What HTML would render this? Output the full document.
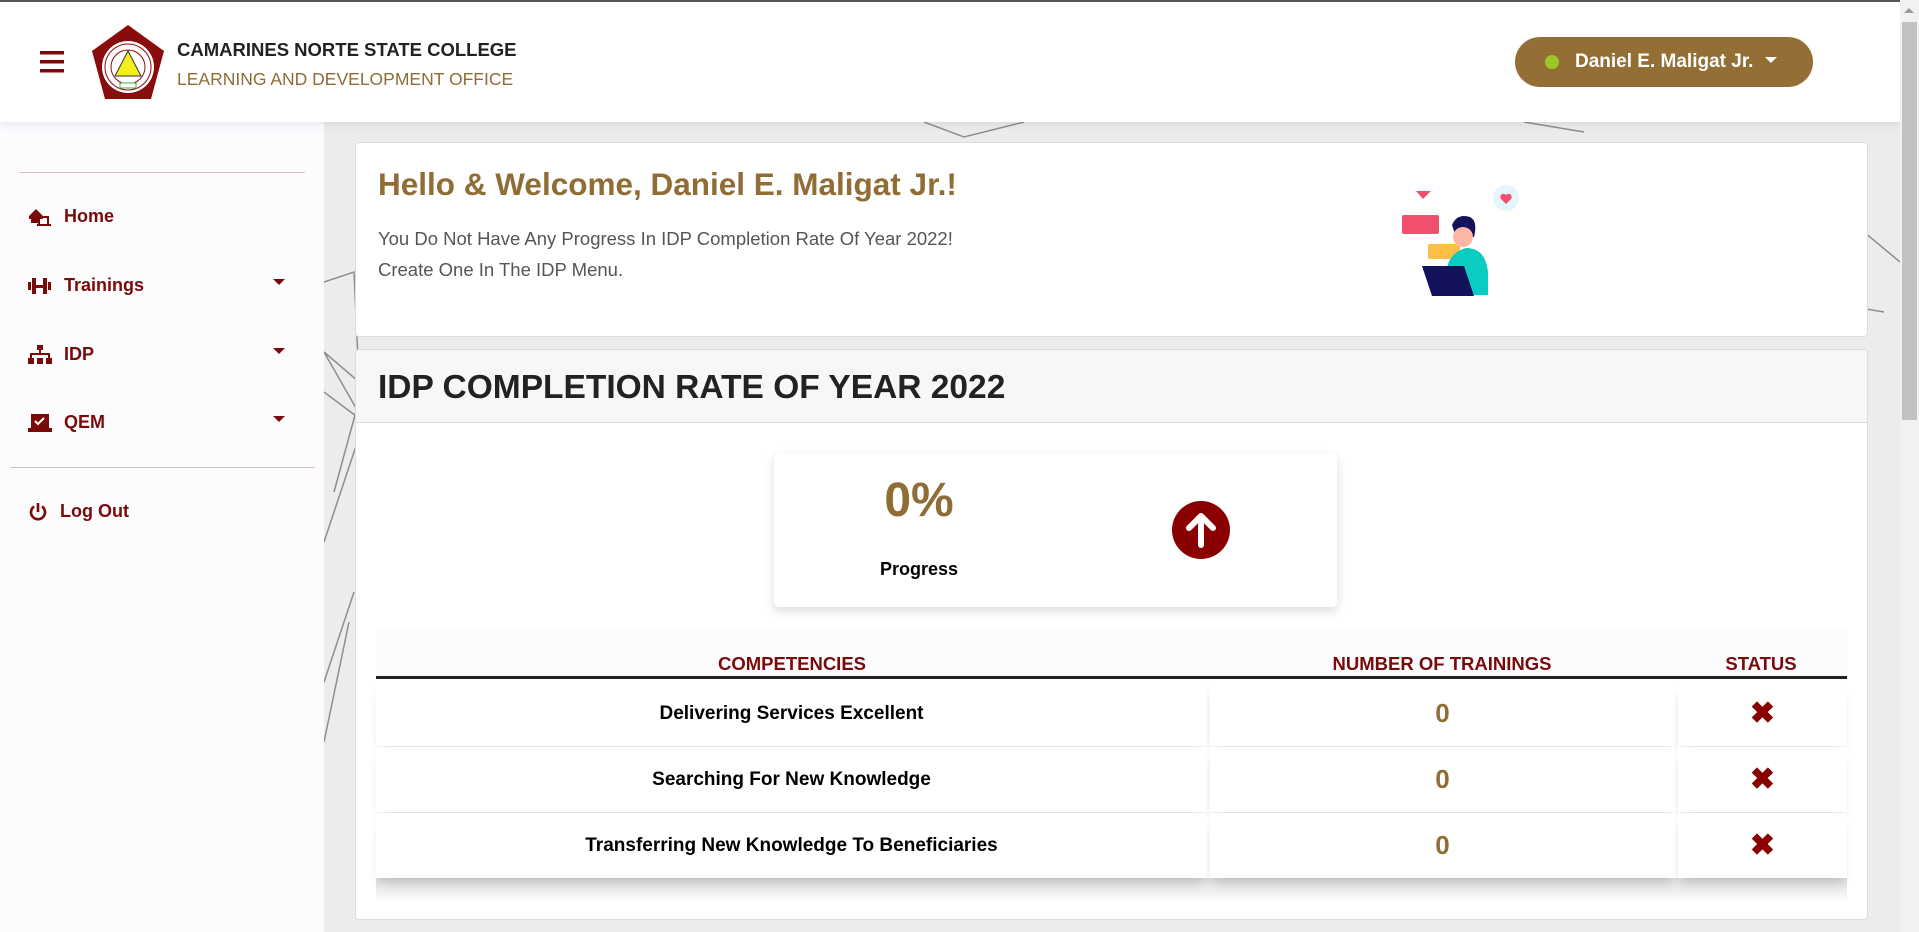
<!DOCTYPE html>
<html><head><meta charset="utf-8"><style>
*{box-sizing:border-box;margin:0;padding:0}
body{width:1919px;height:932px;overflow:hidden;font-family:"Liberation Sans",sans-serif;background:#ececec;position:relative}
.top{position:absolute;left:0;top:0;width:1900px;height:122px;background:#fff;box-shadow:0 3px 8px rgba(0,0,0,.08);z-index:3;border-top:2px solid #555}
.sb{position:absolute;left:0;top:122px;width:324px;height:810px;background:#fcfbfe;z-index:2}
.sb .hr{position:absolute;height:1px;background:#e2b9bd}
.nav{position:absolute;left:28px;color:#7a0a0a;font-weight:bold;font-size:18px;display:flex;align-items:center}
.nav svg{margin-right:12px}
.car{position:absolute;left:273px;width:0;height:0;border-left:6px solid transparent;border-right:6px solid transparent;border-top:6px solid #7a0a0a}
.card{position:absolute;background:#fff;border:1px solid #dcdcdc;border-radius:4px;z-index:1}
.scroll{position:absolute;left:1900px;top:0;width:19px;height:932px;background:#f1f1f1;z-index:4}
.th{position:absolute;top:653px;color:#7a0a0a;font-weight:bold;font-size:18.5px;transform:translateX(-50%);white-space:nowrap}
.cell{position:absolute;background:#fff;box-shadow:0 8px 10px -4px rgba(0,0,0,.15);display:flex;align-items:center;justify-content:center;font-weight:bold}
</style></head><body>
<svg style="position:absolute;left:324px;top:122px;z-index:0" width="1576" height="810">
<g stroke="#777" stroke-width="1.5" fill="none" opacity=".8">
<path d="M0 160 L30 150 L35 260 L0 230"/><path d="M0 230 L40 300 L0 420 M40 300 L0 270 M40 260 L10 370"/>
<path d="M30 470 L0 560 M0 620 L25 500"/>
<path d="M600 0 L640 15 L700 0 M1200 0 L1260 10"/>
<path d="M1540 110 L1576 140 M1500 180 L1560 190"/>
<path d="M1100 160 L1200 200 L1300 170 M900 170 L1000 200"/>
</g></svg>
<div class="top">
<svg style="position:absolute;left:40px;top:49px" width="24" height="22"><rect y="0" width="24" height="3.5" fill="#7a0a0a"/><rect y="9" width="24" height="3.5" fill="#7a0a0a"/><rect y="18" width="24" height="3.5" fill="#7a0a0a"/></svg>
<svg style="position:absolute;left:90px;top:21px" width="76" height="78" viewBox="0 0 76 78">
<polygon points="38,2 74,28 61,76 15,76 2,28" fill="#8a0b0b"/>
<circle cx="38" cy="44" r="26" fill="#fff"/><circle cx="38" cy="44" r="23" fill="none" stroke="#8a0b0b" stroke-width="1"/><circle cx="38" cy="44" r="17" fill="none" stroke="#8a0b0b" stroke-width="1"/>
<polygon points="38,28 51,53 25,53" fill="#f5ef1c" stroke="#333" stroke-width="1"/><rect x="30" y="60" width="16" height="5" fill="#fff" stroke="#4a4" stroke-width="1"/></svg>
<div style="position:absolute;left:177px;top:37px;font-weight:bold;font-size:18.5px;color:#222">CAMARINES NORTE STATE COLLEGE</div>
<div style="position:absolute;left:177px;top:67px;font-size:17.5px;color:#8f6d35">LEARNING AND DEVELOPMENT OFFICE</div>
<div style="position:absolute;left:1515px;top:35px;width:298px;height:50px;border-radius:25px;background:#936f35;color:#fff;font-weight:bold;font-size:19px;display:flex;align-items:center">
<span style="width:14px;height:14px;border-radius:50%;background:#9bc72a;margin-left:30px;margin-right:16px"></span>Daniel E. Maligat Jr.<span style="margin-left:12px;border-left:6px solid transparent;border-right:6px solid transparent;border-top:6px solid #fff;margin-top:-4px"></span></div>
</div>
<div class="sb">
<div class="hr" style="left:20px;top:50px;width:285px"></div>
<div class="nav" style="top:84px"><svg width="24" height="20" viewBox="0 0 24 20"><path d="M1 9 L8 2 L15 9 L15 12 L1 12Z" fill="#7a0a0a"/><rect x="3" y="8" width="8" height="8" fill="#7a0a0a"/><rect x="11" y="10" width="9" height="8" fill="none" stroke="#7a0a0a" stroke-width="2"/><rect x="9" y="17" width="14" height="2" fill="#7a0a0a"/></svg>Home</div>
<div class="nav" style="top:153px"><svg width="24" height="18" viewBox="0 0 24 18"><rect x="0" y="5" width="3" height="8" fill="#7a0a0a"/><rect x="4" y="1" width="4" height="16" fill="#7a0a0a"/><rect x="8" y="8" width="8" height="3" fill="#7a0a0a"/><rect x="15" y="1" width="4" height="16" fill="#7a0a0a"/><rect x="20" y="5" width="3" height="8" fill="#7a0a0a"/></svg>Trainings</div>
<div class="car" style="top:157px"></div>
<div class="nav" style="top:222px"><svg width="24" height="20" viewBox="0 0 24 20"><rect x="9" y="0" width="6" height="5" fill="#7a0a0a"/><path d="M12 5v4M3 13V9h18v4" stroke="#7a0a0a" stroke-width="2" fill="none"/><rect x="0" y="13" width="6" height="6" fill="#7a0a0a"/><rect x="9" y="13" width="6" height="6" fill="#7a0a0a"/><rect x="18" y="13" width="6" height="6" fill="#7a0a0a"/></svg>IDP</div>
<div class="car" style="top:226px"></div>
<div class="nav" style="top:290px"><svg width="24" height="20" viewBox="0 0 24 20"><rect x="3" y="1" width="18" height="14" fill="#7a0a0a"/><path d="M7 8l3 3 6-6" stroke="#fff" stroke-width="2" fill="none"/><rect x="0" y="15" width="24" height="4" fill="#7a0a0a"/></svg>QEM</div>
<div class="car" style="top:294px"></div>
<div class="hr" style="left:10px;top:345px;width:305px"></div>
<div class="nav" style="top:379px"><svg width="20" height="20" viewBox="0 0 20 20"><path d="M6 4.5A7 7 0 1 0 14 4.5" stroke="#7a0a0a" stroke-width="2.6" fill="none"/><path d="M10 1v9" stroke="#7a0a0a" stroke-width="2.6"/></svg>Log Out</div>
</div>
<div class="card" style="left:355px;top:142px;width:1513px;height:195px">
<div style="position:absolute;left:22px;top:23px;font-size:31.5px;font-weight:bold;color:#8f6d35">Hello &amp; Welcome, Daniel E. Maligat Jr.!</div>
<div style="position:absolute;left:22px;top:80px;font-size:18.5px;color:#555;line-height:31px">You Do Not Have Any Progress In IDP Completion Rate Of Year 2022!<br>Create One In The IDP Menu.</div>
<svg style="position:absolute;left:1035px;top:40px" width="140" height="115" viewBox="0 0 140 115">
<circle cx="115" cy="15" r="13" fill="#e6f4fb"/><path d="M115 21l-5-5a3 3 0 0 1 5-4 3 3 0 0 1 5 4z" fill="#f0506e"/>
<path d="M25 8l15 0-8 8z" fill="#f0506e"/>
<rect x="11" y="32" width="37" height="19" rx="2" fill="#f0506e"/><rect x="37" y="61" width="32" height="15" rx="2" fill="#fbbf45"/>
<path d="M61 42q5-12 18-8q8 4 4 20l-18 0z" fill="#15125c"/><circle cx="72" cy="54" r="10" fill="#fcb7a5"/>
<path d="M55 95q0-25 20-30q20 0 22 25l0 22l-35 0z" fill="#0ccbc0"/>
<path d="M31 83l42 0 10 30-42 0z" fill="#15125c"/></svg>
</div>
<div class="card" style="left:355px;top:349px;width:1513px;height:571px;overflow:hidden">
<div style="position:absolute;left:0;top:0;width:100%;height:73px;background:#f7f7f7;border-bottom:1px solid #ddd"></div>
<div style="position:absolute;left:22px;top:19px;font-size:33.5px;font-weight:bold;color:#222">IDP COMPLETION RATE OF YEAR 2022</div>
</div>
<div style="position:absolute;left:774px;top:453px;width:563px;height:154px;background:#fff;border-radius:5px;box-shadow:0 4px 10px rgba(0,0,0,.15);z-index:1">
<div style="position:absolute;left:145px;top:20px;width:0;display:flex;justify-content:center"><span style="font-size:48px;font-weight:bold;color:#8f6d35;white-space:nowrap">0%</span></div>
<div style="position:absolute;left:145px;top:106px;width:0;display:flex;justify-content:center"><span style="font-size:18px;font-weight:bold;white-space:nowrap">Progress</span></div>
<svg style="position:absolute;left:398px;top:48px" width="58" height="58" viewBox="0 0 58 58"><circle cx="29" cy="29" r="29" fill="#8a0000"/><path d="M29 44V16M17 27l12-12 12 12" stroke="#fff" stroke-width="6" fill="none" stroke-linecap="round" stroke-linejoin="round"/></svg>
</div>
<div style="position:absolute;left:376px;top:628px;width:1471px;height:51px;background:#fcfbfe;border-bottom:3px solid #222;z-index:1"></div>
<div style="position:absolute;left:376px;top:878px;width:1471px;height:22px;background:linear-gradient(#ddd,#fafafa);z-index:1"></div>
<div class="th" style="left:792px;z-index:2">COMPETENCIES</div>
<div class="th" style="left:1442px;z-index:2">NUMBER OF TRAININGS</div>
<div class="th" style="left:1761px;z-index:2">STATUS</div>
<div style="z-index:1;position:absolute;left:0;top:0">
<div class="cell" style="left:376px;top:681px;width:831px;height:65px;font-size:19px">Delivering Services Excellent</div>
<div class="cell" style="left:1210px;top:681px;width:465px;height:65px;font-size:26px;color:#8f6d35">0</div>
<div class="cell" style="left:1678px;top:681px;width:169px;height:65px;font-size:30px;color:#8a0000">✖</div>
<div class="cell" style="left:376px;top:747px;width:831px;height:65px;font-size:19px">Searching For New Knowledge</div>
<div class="cell" style="left:1210px;top:747px;width:465px;height:65px;font-size:26px;color:#8f6d35">0</div>
<div class="cell" style="left:1678px;top:747px;width:169px;height:65px;font-size:30px;color:#8a0000">✖</div>
<div class="cell" style="left:376px;top:813px;width:831px;height:65px;font-size:19px">Transferring New Knowledge To Beneficiaries</div>
<div class="cell" style="left:1210px;top:813px;width:465px;height:65px;font-size:26px;color:#8f6d35">0</div>
<div class="cell" style="left:1678px;top:813px;width:169px;height:65px;font-size:30px;color:#8a0000">✖</div>
</div>
<div class="scroll"><div style="position:absolute;left:4px;top:8px;border-left:5px solid transparent;border-right:5px solid transparent;border-bottom:5px solid #999"></div><div style="position:absolute;left:2px;top:22px;width:15px;height:398px;background:#c1c1c1"></div></div>
</body></html>
